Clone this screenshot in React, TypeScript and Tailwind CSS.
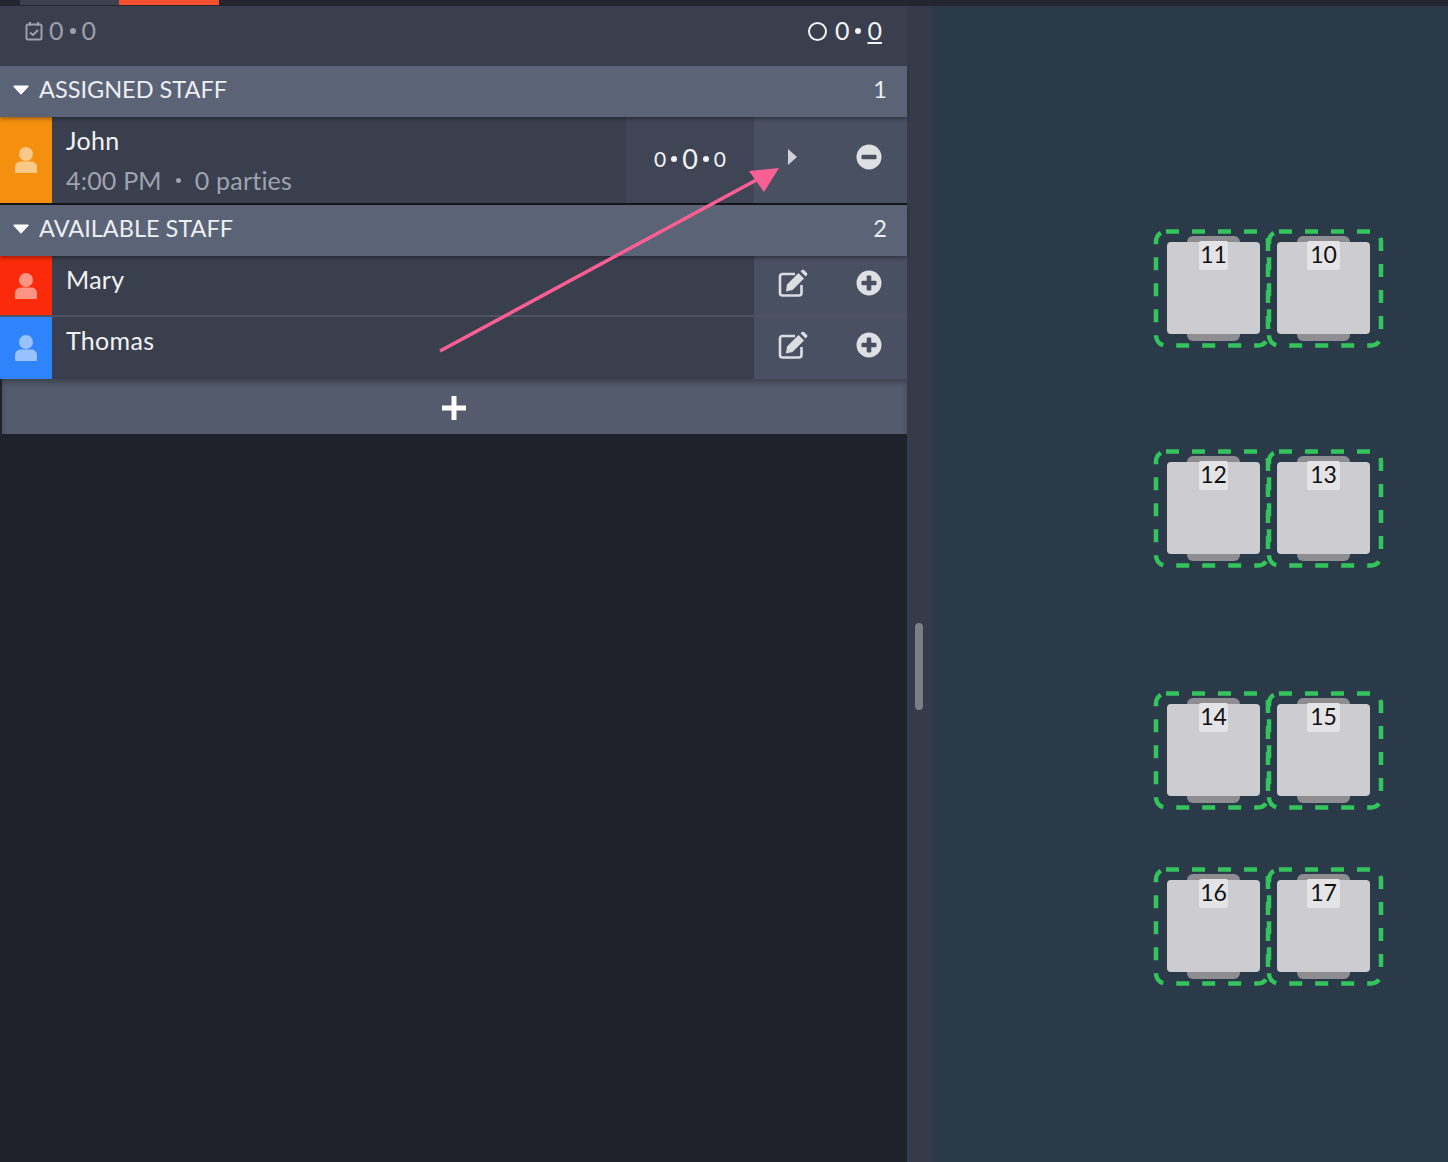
import { ReactNode } from 'react';

function PersonIcon() {
  return (
    <svg width="24" height="28" viewBox="0 0 24 28" className="fill-white/50">
      <circle cx="12" cy="8" r="7" />
      <path d="M1 26v-5c0-3.500 3-5.500 6-5.500h10c3 0 6 2 6 5.500v5c0 .5-.5 1-1 1H2c-.5 0-1-.5-1-1z" />
    </svg>
  );
}

function Caret() {
  return (
    <svg width="16" height="10" viewBox="0 0 16 10" className="fill-white">
      <path d="M1 .5h14a.7.7 0 0 1 .5 1.200L8.500 9.300a.7.7 0 0 1-1 0L.5 1.700A.7.7 0 0 1 1 .5z" />
    </svg>
  );
}

function EditIcon() {
  return (
    <svg width="30" height="28" viewBox="0 0 30 28" className="text-[#dcdde1]">
      <path d="M17 5H4.500C3 5 2 6 2 7.500V24c0 1.500 1 2.500 2.500 2.500H21c1.500 0 2.500-1 2.500-2.500v-8" fill="none" stroke="currentColor" strokeWidth="2.600" />
      <path d="M9 15.500 20.500 4l5.500 5.500L14.500 21 8 22.500z" fill="currentColor" />
      <path d="M22.500 2.300 24 1c.6-.5 1.400-.5 2 0l3 3c.5.6.5 1.400 0 2l-1.400 1.500z" fill="currentColor" />
    </svg>
  );
}

function RoundAction({ kind }: { kind: 'plus' | 'minus' }) {
  return (
    <svg width="26" height="26" viewBox="0 0 26 26">
      <circle cx="13" cy="13" r="12.500" fill="#dfe0e4" />
      <rect x="5.500" y="10.700" width="15" height="4.600" rx="1" fill="#485062" />
      {kind === 'plus' && <rect x="10.700" y="5.500" width="4.600" height="15" rx="1" fill="#485062" />}
    </svg>
  );
}

function SectionHeader({ title, count }: { title: string; count: number }) {
  return (
    <div className="flex items-center justify-between h-[51px] pb-[4px] bg-[#5b6377] pl-[13px] pr-[20px] text-[23.500px] text-[#eceef1] shadow-[0_2px_4px_rgba(0,0,0,0.35)] relative z-10">
      <div className="flex items-center gap-[10px]">
        <Caret />
        <span>{title}</span>
      </div>
      <span>{count}</span>
    </div>
  );
}

function StaffRow({ color, name, className, children, sub }: { color: string; name: string; className: string; children: ReactNode; sub?: ReactNode }) {
  return (
    <div className={`flex bg-[#3a3f4e] ${className}`}>
      <div className={`w-[52px] shrink-0 flex items-center justify-center ${color}`}>
        <PersonIcon />
      </div>
      <div className="flex-1 pl-[14px] text-[#f1f2f4]">
        <div className="text-[25px] leading-[30px] mt-[8px] tracking-[0.3px]">{name}</div>
        {sub}
      </div>
      {children}
    </div>
  );
}

function Actions({ kind }: { kind: 'plus' | 'minus' }) {
  return (
    <div className="w-[153px] shrink-0 bg-[#485062] flex items-center pb-[6px]">
      <div className="w-[76px] flex justify-center pl-[1px]">
        {kind === 'plus' ? <EditIcon /> : <svg width="11" height="16" viewBox="0 0 11 16" className="fill-[#cfd1d6]"><path d="M1 0l9 8-9 8z" /></svg>}
      </div>
      <div className="flex-1 flex justify-center">
        <RoundAction kind={kind} />
      </div>
    </div>
  );
}

function Seat({ label, wide }: { label: string; wide?: boolean }) {
  return (
    <div className="relative w-[93px] h-[92px] bg-[#cdccd1] rounded-[4px]">
      <div className="absolute left-[20px] -top-[6px] w-[53px] h-[6px] bg-[#8e8d92] rounded-t-[6px]" />
      <div className="absolute left-[20px] -bottom-[7px] w-[53px] h-[7px] bg-[#8e8d92] rounded-b-[6px]" />
      <div className={`absolute top-[-1px] h-[29px] pb-[2px] bg-[#e4e4e7] rounded-[2px] flex items-center justify-center text-[23px] text-[#111] ${wide ? 'left-[30px] w-[33px]' : 'left-[32px] w-[29px]'}`}>
        {label}
      </div>
    </div>
  );
}

function TableGroup({ left, right, top }: { left: string; right: string; top: string }) {
  return (
    <div className={`absolute left-[220px] w-[232px] h-[120px] ${top}`}>
      <svg width="232" height="120" viewBox="0 0 232 120" className="absolute inset-0" fill="none" stroke="#33c45c" strokeWidth="4.500">
        <rect x="4" y="3.500" width="112" height="114" rx="10" strokeDasharray="13 13" />
        <rect x="117" y="3.500" width="112" height="114" rx="10" strokeDasharray="13 13" />
      </svg>
      <div className="absolute left-[15px] top-[14px] flex gap-[17px]">
        <Seat label={left} />
        <Seat label={right} wide />
      </div>
    </div>
  );
}

export default function App() {
  return (
    <div className="relative w-[1448px] h-[1162px] overflow-hidden bg-[#2b3a48] font-['Lato','Open_Sans',sans-serif] flex flex-col">
      {/* tab strip */}
      <div className="h-[6px] shrink-0 bg-[#23262f] flex">
        <div className="ml-[20px] w-[99px] h-[5px] bg-[#3c4150]" />
        <div className="w-[100px] h-[5px] bg-[#f4502f]" />
      </div>

      <div className="flex flex-1 min-h-0">
        <div className="w-[907px] shrink-0 bg-[#1f222b] flex flex-col">
          {/* summary bar */}
          <div className="h-[60px] bg-[#3a3f4e] flex items-center justify-between pl-[25px] pr-[25px] pb-[10px]">
            <div className="flex items-center gap-[6px] text-[25px] text-[#9aa0ad]">
              <svg width="18" height="20" viewBox="0 0 18 20" fill="none" stroke="#9aa0ad" strokeWidth="2">
                <rect x="1.500" y="3.500" width="15" height="15" rx="1.500" />
                <path d="M5 1v4M13 1v4M5 11.500l3 2.500 5-5" />
              </svg>
              <span>0</span>
              <span className="w-[6px] h-[6px] rounded-full bg-[#9aa0ad]" />
              <span>0</span>
            </div>
            <div className="flex items-center gap-[6px] text-[25px] text-[#f1f2f4]">
              <span className="w-[19px] h-[19px] rounded-full border-2 border-[#f1f2f4] mr-[2px]" />
              <span>0</span>
              <span className="w-[6px] h-[6px] rounded-full bg-[#f1f2f4]" />
              <span className="underline underline-offset-[2px]">0</span>
            </div>
          </div>

          <SectionHeader title="ASSIGNED STAFF" count={1} />
          <StaffRow
            color="bg-[#f5900e]"
            name="John"
            className="h-[86px]"
            sub={
              <div className="mt-[10px] flex items-center text-[25px] leading-[30px] text-[#9ea3ae] tracking-[0.2px]">
                <span>4:00 PM</span>
                <span className="mx-[14px] w-[5px] h-[5px] rounded-full bg-[#9ea3ae]" />
                <span>0 parties</span>
              </div>
            }
          >
            <div className="w-[128px] shrink-0 bg-[#404555] flex items-center justify-center gap-[5px] pb-[2px] text-[#f1f2f4]">
              <span className="text-[21px]">0</span>
              <span className="w-[6px] h-[6px] rounded-full bg-[#f1f2f4]" />
              <span className="text-[27px]">0</span>
              <span className="w-[6px] h-[6px] rounded-full bg-[#f1f2f4]" />
              <span className="text-[21px]">0</span>
            </div>
            <Actions kind="minus" />
          </StaffRow>

          <div className="h-[2px] bg-[#15171d]" />
          <SectionHeader title="AVAILABLE STAFF" count={2} />
          <StaffRow color="bg-[#fb2a0a]" name="Mary" className="h-[59px]">
            <Actions kind="plus" />
          </StaffRow>
          <div className="h-[2px] bg-[#4d5364]" />
          <StaffRow color="bg-[#2f84fb]" name="Thomas" className="h-[62px]">
            <Actions kind="plus" />
          </StaffRow>

          <div className="h-[55px] ml-[2px] bg-[#535b6c] flex items-center justify-center shadow-[inset_0_4px_5px_rgba(0,0,0,0.25)]">
            <svg width="26" height="26" viewBox="0 0 26 26" className="fill-white translate-y-[1px] -translate-x-[1px]">
              <path d="M10.500 1h5v9.500H25v5h-9.500V25h-5v-9.500H1v-5h9.500z" />
            </svg>
          </div>
        </div>

        {/* splitter */}
        <div className="w-[25px] shrink-0 bg-[#363b4a] relative">
          <div className="absolute left-[8px] top-[617px] w-[8px] h-[87px] rounded-full bg-[#7b7e88]" />
        </div>

        {/* floor plan canvas */}
        <div className="relative flex-1">
          <TableGroup left="11" right="10" top="top-[222px]" />
          <TableGroup left="12" right="13" top="top-[442px]" />
          <TableGroup left="14" right="15" top="top-[684px]" />
          <TableGroup left="16" right="17" top="top-[860px]" />
        </div>
      </div>

      {/* annotation arrow */}
      <svg width="1448" height="1162" viewBox="0 0 1448 1162" className="absolute inset-0 z-20 pointer-events-none">
        <path d="M440 351 760 178" stroke="#fb5f94" strokeWidth="3.500" fill="none" />
        <path d="M779 168 749 171 764 192z" fill="#fb5f94" />
      </svg>
    </div>
  );
}
